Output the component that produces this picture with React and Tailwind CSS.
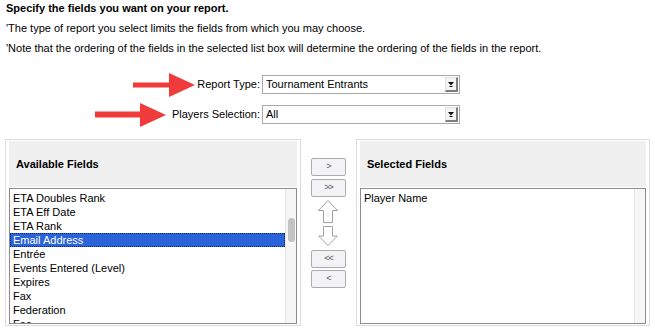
const leftItems = [
  "ETA Doubles Rank",
  "ETA Eff Date",
  "ETA Rank",
  "Email Address",
  "Entrée",
  "Events Entered (Level)",
  "Expires",
  "Fax",
  "Federation",
  "Fee",
];

const RedArrow = ({ width, shaftTop, shaftBottom, headStart }) => (
  <svg width={width} height="24" viewBox={`0 0 ${width} 24`} className="shrink-0">
    <path
      d={`M0 ${shaftTop} H${headStart} V0 L${width} 12 L${headStart} 24 V${shaftBottom} H0 Z`}
      fill="#ef3b3b"
    />
  </svg>
);

const SelectBox = ({ value }) => (
  <div className="w-[198px] h-[19px] border border-[#a9a9a9] bg-white flex items-center">
    <span className="flex-1 pl-[3px] leading-[17px]">{value}</span>
    <div className="w-[13px] h-[15px] mr-[1px] bg-[#f4f4f4] border-t border-l border-[#e0e0e0] border-r-2 border-b-2 border-r-[#7d7d7d] border-b-[#7d7d7d] flex items-center justify-center">
      <svg width="6" height="5" viewBox="0 0 6 5">
        <path d="M0 0 H6 L3 3.5 Z" fill="#111" />
        <rect x="1.5" y="4" width="3" height="1" fill="#111" />
      </svg>
    </div>
  </div>
);

const Scrollbar = ({ thumb }) => (
  <div className="w-[11px] shrink-0 bg-[#f6f6f6] border-l border-[#e6e6e6] flex flex-col items-center">
    {thumb && <div className="mt-[29px] w-[7px] h-[24px] rounded-full bg-[#c3c3c3]" />}
  </div>
);

const Panel = ({ title, width, children, thumb }) => (
  <div className={`${width} h-[187px] border border-[#dcdcdc] pt-[1px] px-[3px] pb-[1px] flex flex-col`}>
    <div className="h-[46px] bg-[#f0f0f0] flex items-center pl-[7px] font-bold">{title}</div>
    <div className="mt-[1px] flex-1 border border-[#8c8c8c] bg-white flex overflow-hidden">
      <div className="flex-1 pt-[2px]">{children}</div>
      <Scrollbar thumb={thumb} />
    </div>
  </div>
);

const MoveButton = ({ label, className = "" }) => (
  <div className={`w-[35px] h-[18px] rounded-[2px] border border-[#ababab] bg-[#f3f3f5] flex items-center justify-center text-[9px] text-[#555] tracking-[-1px] ${className}`}>
    {label}
  </div>
);

const UpArrow = () => (
  <svg width="20" height="23" viewBox="0 0 20 23" className="mt-[3px]">
    <path d="M10 0.5 L19.5 10.5 H14.5 V22.5 H5.5 V10.5 H0.5 Z" fill="#fff" stroke="#a0a0a0" />
  </svg>
);

const DownArrow = () => (
  <svg width="20" height="20" viewBox="0 0 20 20" className="mt-[3px]">
    <path d="M5.5 0.5 H14.5 V10 H19.5 L10 19.5 L0.5 10 H5.5 Z" fill="#fff" stroke="#a0a0a0" />
  </svg>
);

export default function App() {
  return (
    <div className="w-[655px] h-[336px] bg-white overflow-hidden text-[11px] text-black font-['Liberation_Sans',Arial,sans-serif]">
      <div className="px-[6px]">
        <p className="font-bold leading-[16px]">Specify the fields you want on your report.</p>
        <p className="mt-[4px] leading-[16px]">'The type of report you select limits the fields from which you may choose.</p>
        <p className="mt-[4px] leading-[16px]">
          'Note that the ordering of the fields in the selected list box will determine the ordering of the fields in the report.
        </p>
      </div>

      <div className="mt-[19px] h-[19px] flex items-center pl-[6px]">
        <div className="w-[256px] flex items-center justify-end pr-[2px]">
          <RedArrow width={62} shaftTop={9.5} shaftBottom={14.5} headStart={36} />
          <span className="ml-[2px]">Report Type:</span>
        </div>
        <SelectBox value="Tournament Entrants" />
      </div>

      <div className="mt-[11px] h-[19px] flex items-center pl-[6px]">
        <div className="w-[256px] flex items-center justify-end pr-[2px]">
          <RedArrow width={71} shaftTop={8.5} shaftBottom={14.5} headStart={45} />
          <span className="ml-[6px]">Players Selection:</span>
        </div>
        <SelectBox value="All" />
      </div>

      <div className="mt-[15px] px-[5px] flex">
        <Panel title="Available Fields" width="w-[297px]" thumb>
          {leftItems.map((item) =>
            item === "Email Address" ? (
              <div key={item} className="h-[14px] leading-[12px] pl-[2px] bg-[#2a64d8] text-white border border-dotted border-[#0b2a80]">
                {item}
              </div>
            ) : (
              <div key={item} className="h-[14px] leading-[14px] pl-[3px]">
                {item}
              </div>
            )
          )}
        </Panel>

        <div className="w-[55px] flex flex-col items-center pt-[19px]">
          <MoveButton label=">" />
          <MoveButton label=">>" className="mt-[3px] h-[17px]" />
          <UpArrow />
          <DownArrow />
          <MoveButton label="<<" className="mt-[4px]" />
          <MoveButton label="<" className="mt-[2px]" />
        </div>

        <Panel title="Selected Fields" width="w-[295px]">
          <div className="h-[14px] leading-[14px] pl-[3px]">Player Name</div>
        </Panel>
      </div>
    </div>
  );
}
